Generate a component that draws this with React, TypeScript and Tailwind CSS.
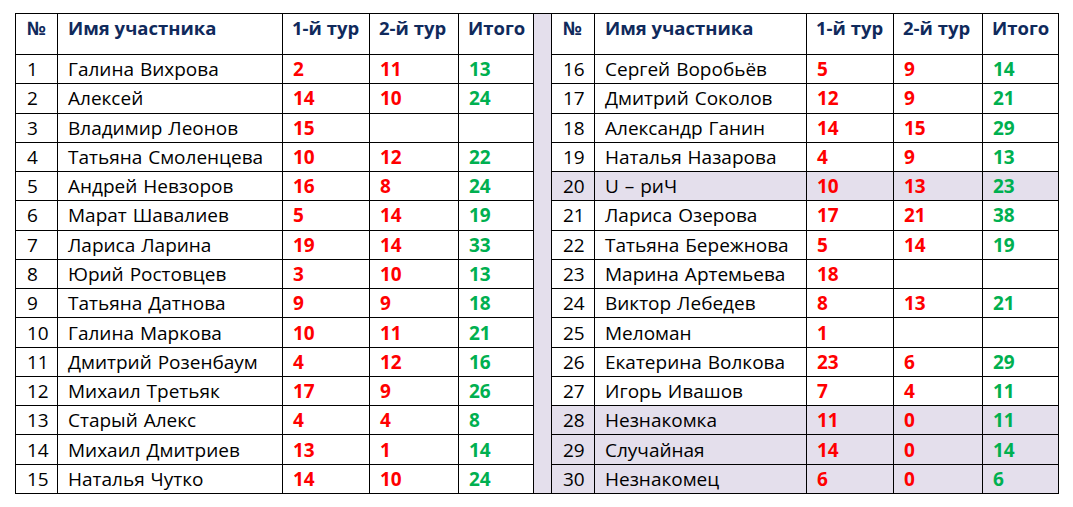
import React from "react";

type Row = [string, string, string, string, string, boolean?];

const left: Row[] = [
  ["1", "Галина Вихрова", "2", "11", "13"],
  ["2", "Алексей", "14", "10", "24"],
  ["3", "Владимир Леонов", "15", "", ""],
  ["4", "Татьяна Смоленцева", "10", "12", "22"],
  ["5", "Андрей Невзоров", "16", "8", "24"],
  ["6", "Марат Шавалиев", "5", "14", "19"],
  ["7", "Лариса Ларина", "19", "14", "33"],
  ["8", "Юрий Ростовцев", "3", "10", "13"],
  ["9", "Татьяна Датнова", "9", "9", "18"],
  ["10", "Галина Маркова", "10", "11", "21"],
  ["11", "Дмитрий Розенбаум", "4", "12", "16"],
  ["12", "Михаил Третьяк", "17", "9", "26"],
  ["13", "Старый Алекс", "4", "4", "8"],
  ["14", "Михаил Дмитриев", "13", "1", "14"],
  ["15", "Наталья Чутко", "14", "10", "24"],
];

const right: Row[] = [
  ["16", "Сергей Воробьёв", "5", "9", "14"],
  ["17", "Дмитрий Соколов", "12", "9", "21"],
  ["18", "Александр Ганин", "14", "15", "29"],
  ["19", "Наталья Назарова", "4", "9", "13"],
  ["20", "U – риЧ", "10", "13", "23", true],
  ["21", "Лариса Озерова", "17", "21", "38"],
  ["22", "Татьяна Бережнова", "5", "14", "19"],
  ["23", "Марина Артемьева", "18", "", ""],
  ["24", "Виктор Лебедев", "8", "13", "21"],
  ["25", "Меломан", "1", "", ""],
  ["26", "Екатерина Волкова", "23", "6", "29"],
  ["27", "Игорь Ивашов", "7", "4", "11"],
  ["28", "Незнакомка", "11", "0", "11", true],
  ["29", "Случайная", "14", "0", "14", true],
  ["30", "Незнакомец", "6", "0", "6", true],
];

const cell = "border-r border-b border-black flex items-center pt-[1px] text-[19px]";

function Header() {
  const h = "border-r border-b border-black flex items-start pt-[5px] font-bold text-[#102a5c] text-[18.5px]";
  return (
    <>
      <div className={`${h} pl-[11px]`}>№</div>
      <div className={`${h} pl-[10px]`}>Имя участника</div>
      <div className={`${h} pl-[9px]`}>1-й тур</div>
      <div className={`${h} pl-[9px]`}>2-й тур</div>
      <div className={`${h} pl-[9px]`}>Итого</div>
    </>
  );
}

function Cells({ r }: { r: Row }) {
  const bg = r[5] ? "bg-[#e4dfec]" : "";
  return (
    <>
      <div className={`${cell} ${bg} pl-[11px] text-black`}>{r[0]}</div>
      <div className={`${cell} ${bg} pl-[10px] text-black [word-spacing:1px]`}>{r[1]}</div>
      <div className={`${cell} ${bg} pl-[10px] font-bold text-[#ff0000]`}>{r[2]}</div>
      <div className={`${cell} ${bg} pl-[10px] font-bold text-[#ff0000]`}>{r[3]}</div>
      <div className={`${cell} ${bg} pl-[10px] font-bold text-[#00b050]`}>{r[4]}</div>
    </>
  );
}

export default function App() {
  return (
    <div className="w-[1073px] h-[507px] bg-white pt-[13px] pl-[15px]" style={{ fontFamily: '"Open Sans", "Noto Sans", sans-serif' }}>
      <div className="grid grid-cols-[42px_225px_87px_89px_75px_18px_43px_212px_87px_89px_76px] grid-rows-[41px_repeat(15,1fr)] h-[481px] w-[1044px] border-l border-t border-black leading-none">
        <Header />
        <div className="row-span-16 bg-[#e4dfec] border-r border-b border-black" />
        <Header />
        {left.map((r, i) => (
          <React.Fragment key={i}>
            <Cells r={r} />
            <Cells r={right[i]} />
          </React.Fragment>
        ))}
      </div>
    </div>
  );
}
